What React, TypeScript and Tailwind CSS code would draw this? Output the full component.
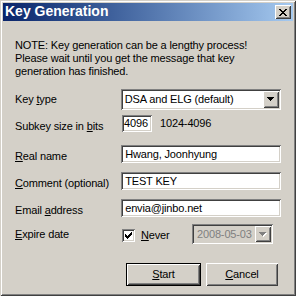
const raised =
  "shadow-[inset_1px_1px_0_#ffffff,inset_-1px_-1px_0_#404040,inset_2px_2px_0_#d4d0c8,inset_-2px_-2px_0_#808080]";
const sunken =
  "shadow-[inset_1px_1px_0_#808080,inset_-1px_-1px_0_#ffffff,inset_2px_2px_0_#404040,inset_-2px_-2px_0_#d4d0c8]";

function CloseGlyph() {
  const px = [
    [0, 0], [1, 0], [6, 0], [7, 0],
    [1, 1], [2, 1], [5, 1], [6, 1],
    [2, 2], [3, 2], [4, 2], [5, 2],
    [3, 3], [4, 3],
    [2, 4], [3, 4], [4, 4], [5, 4],
    [1, 5], [2, 5], [5, 5], [6, 5],
    [0, 6], [1, 6], [6, 6], [7, 6],
  ];
  return (
    <svg width="8" height="7" viewBox="0 0 8 7" shapeRendering="crispEdges">
      {px.map(([x, y]) => (
        <rect key={`${x}-${y}`} x={x} y={y} width="1" height="1" fill="#000" />
      ))}
    </svg>
  );
}

function Arrow({ disabled }: { disabled?: boolean }) {
  const tri = "M0 0h7v1h-1v1h-1v1h-1v1h-1v-1h-1v-1h-1v-1h-1z";
  return (
    <svg width="8" height="5" viewBox="0 0 8 5" shapeRendering="crispEdges">
      {disabled ? <path d={tri} transform="translate(1 1)" fill="#ffffff" /> : null}
      <path d={tri} fill={disabled ? "#808080" : "#000"} />
    </svg>
  );
}

function Check() {
  const rows = ["......#", ".....##", "#...###", "##.###.", "#####..", ".###...", "..#...."];
  return (
    <svg width="7" height="7" viewBox="0 0 7 7" shapeRendering="crispEdges">
      {rows.flatMap((r, y) =>
        r.split("").map((c, x) =>
          c === "#" ? <rect key={`${x}-${y}`} x={x} y={y} width="1" height="1" fill="#000" /> : null
        )
      )}
    </svg>
  );
}

function TextField({ value }: { value: string }) {
  return (
    <div className={`h-[18px] w-[161px] bg-white ${sunken} px-[4px] pt-[3px] leading-[13px]`}>
      {value}
    </div>
  );
}

export default function App() {
  return (
    <div className="h-[296px] w-[296px] font-['Liberation_Sans',Arial,sans-serif] text-[11px] tracking-[-0.15px] text-black">
      <div className="flex h-full w-full flex-col bg-[#d4d0c8] p-[3px] shadow-[inset_1px_1px_0_#d4d0c8,inset_-1px_-1px_0_#404040,inset_2px_2px_0_#ffffff,inset_-2px_-2px_0_#808080]">
        <div className="flex h-[18px] items-start justify-between bg-linear-to-r from-[#0a246a] to-[#a6caf0] pl-[2px] pr-[2px]">
          <span className="text-[14px] font-bold leading-[16px] tracking-normal text-white">
            Key Generation
          </span>
          <div className={`mt-[2px] flex h-[14px] w-[16px] items-center justify-center bg-[#d4d0c8] ${raised}`}>
            <CloseGlyph />
          </div>
        </div>

        <div className="flex flex-1 flex-col px-[12px] pt-[18px]">
          <p className="leading-[13px]">
            NOTE: Key generation can be a lengthy process!
            <br />
            Please wait until you get the message that key
            <br />
            generation has finished.
          </p>

          <div className="mt-[11px] flex h-[21px]">
            <div className="w-[107px] pt-[4px] leading-[13px]">
              Key <u>t</u>ype
            </div>
            <div className={`flex w-[162px] bg-white p-[2px] ${sunken}`}>
              <div className="flex-1 pl-[2px] pt-[2px] leading-[13px]">DSA and ELG (default)</div>
              <div className={`flex h-[17px] w-[16px] items-center justify-center bg-[#d4d0c8] ${raised}`}>
                <Arrow />
              </div>
            </div>
          </div>

          <div className="mt-[5px] flex h-[17px]">
            <div className="w-[107px] pt-[5px] leading-[13px]">
              Subkey size in <u>b</u>its
            </div>
            <div className={`w-[30px] bg-white pl-[2px] pt-[2px] leading-[13px] ${sunken}`}>4096</div>
            <div className="ml-[8px] pt-[2px] leading-[13px]">1024-4096</div>
          </div>

          <div className="mt-[13px] flex h-[18px]">
            <div className="w-[107px] pt-[5px] leading-[13px]">
              <u>R</u>eal name
            </div>
            <TextField value="Hwang, Joonhyung" />
          </div>

          <div className="mt-[9px] flex h-[18px]">
            <div className="w-[107px] pt-[5px] leading-[13px]">
              <u>C</u>omment (optional)
            </div>
            <TextField value="TEST KEY" />
          </div>

          <div className="mt-[9px] flex h-[18px]">
            <div className="w-[107px] pt-[5px] leading-[13px]">
              Email <u>a</u>ddress
            </div>
            <TextField value="envia@jinbo.net" />
          </div>

          <div className="mt-[7px] flex h-[20px]">
            <div className="w-[107px] pt-[4px] leading-[13px]">
              <u>E</u>xpire date
            </div>
            <div className="flex w-[70px] items-start pt-[5px]">
              <div className={`flex h-[13px] w-[13px] items-center justify-center bg-white ${sunken}`}>
                <Check />
              </div>
              <span className="ml-[6px] leading-[13px]">
                <u>N</u>ever
              </span>
            </div>
            <div className={`flex w-[81px] bg-[#d4d0c8] p-[2px] ${sunken}`}>
              <div className="flex-1 pl-[3px] pt-[2px] leading-[13px] text-[#808080]">2008-05-03</div>
              <div className={`flex h-[16px] w-[16px] items-center justify-center bg-[#d4d0c8] ${raised}`}>
                <Arrow disabled />
              </div>
            </div>
          </div>

          <div className="mt-[19px] flex h-[23px] pl-[111px]">
            <div className="flex w-[75px] items-center justify-center bg-[#d4d0c8] shadow-[inset_0_0_0_1px_#000000,inset_2px_2px_0_#ffffff,inset_-2px_-2px_0_#404040,inset_3px_3px_0_#d4d0c8,inset_-3px_-3px_0_#808080]">
              <span>
                <u>S</u>tart
              </span>
            </div>
            <div className={`ml-[5px] flex w-[72px] items-center justify-center bg-[#d4d0c8] ${raised}`}>
              <span>
                <u>C</u>ancel
              </span>
            </div>
          </div>
        </div>
      </div>
    </div>
  );
}
